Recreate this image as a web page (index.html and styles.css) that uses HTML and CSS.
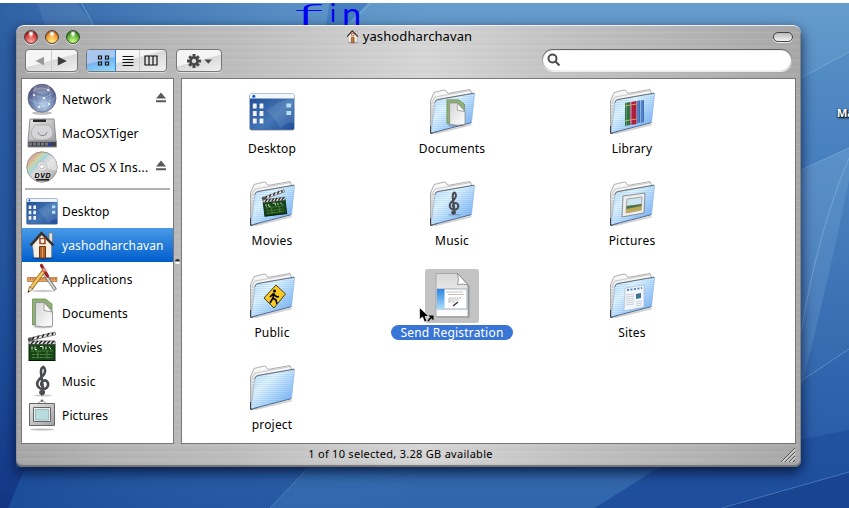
FILE: index.html
```html
<!DOCTYPE html>
<html lang="en">
<head>
<meta charset="utf-8">
<title>yashodharchavan</title>
<link rel="stylesheet" href="styles.css">
</head>
<body>
<svg class="defs" width="0" height="0" aria-hidden="true">
  <defs>
    <linearGradient id="front" x1="0" y1="0" x2="1" y2="1"><stop offset="0" stop-color="#b5daf8"/><stop offset=".35" stop-color="#e0f5ff"/><stop offset=".65" stop-color="#a3cffa"/><stop offset="1" stop-color="#68a5ef"/></linearGradient>
    <linearGradient id="back" x1="0" y1="0" x2="0" y2="1"><stop offset="0" stop-color="#fdfdfd"/><stop offset="1" stop-color="#c4c4c4"/></linearGradient>
    <pattern id="ribs" width="4" height="2" patternUnits="userSpaceOnUse"><path d="M0 .5H4" stroke="#5590d4" stroke-width=".5" opacity=".28"/></pattern>
    <linearGradient id="desk" x1="0" y1="0" x2="1" y2="1"><stop offset="0" stop-color="#1f4a92"/><stop offset=".6" stop-color="#4476b5"/><stop offset="1" stop-color="#1d4b98"/></linearGradient>
    <linearGradient id="paper" x1="0" y1="0" x2="1" y2="1"><stop offset="0" stop-color="#d5d5d5"/><stop offset="1" stop-color="#fff"/></linearGradient>
    <linearGradient id="sheet" x1="0" y1="0" x2="0" y2="1"><stop offset="0" stop-color="#d8d8d8"/><stop offset="1" stop-color="#fff"/></linearGradient>
    <linearGradient id="stripe" x1="0" y1="0" x2="0" y2="1"><stop offset="0" stop-color="#2a86e0"/><stop offset="1" stop-color="#a9dcfb"/></linearGradient>
    <radialGradient id="globe" cx=".55" cy=".75" r=".7"><stop offset="0" stop-color="#b6cdea"/><stop offset=".55" stop-color="#6f86b2"/><stop offset="1" stop-color="#4b4b72"/></radialGradient>
    <linearGradient id="disc" x1="0" y1="0" x2="1" y2="1"><stop offset="0" stop-color="#c9c9c9"/><stop offset=".2" stop-color="#dcae93"/><stop offset=".3" stop-color="#cbd6a8"/><stop offset=".38" stop-color="#a5d3da"/><stop offset=".48" stop-color="#dcdcdc"/><stop offset="1" stop-color="#a8a8a8"/></linearGradient>
    <linearGradient id="metal" x1="0" y1="0" x2="1" y2="1"><stop offset="0" stop-color="#e6e6e6"/><stop offset="1" stop-color="#a2a2a6"/></linearGradient>
    <linearGradient id="wall" x1="0" y1="0" x2="0" y2="1"><stop offset="0" stop-color="#669dcd"/><stop offset=".3" stop-color="#4e86c1"/><stop offset=".7" stop-color="#356bb0"/><stop offset="1" stop-color="#24559f"/></linearGradient>
    <linearGradient id="wallLeft" x1="0" y1="0" x2="1" y2="0"><stop offset="0" stop-color="#174794" stop-opacity=".7"/><stop offset=".3" stop-color="#2860a6" stop-opacity=".3"/><stop offset=".5" stop-color="#3a78b8" stop-opacity="0"/></linearGradient>
    <linearGradient id="navy" x1="0" y1="0" x2="0" y2="1"><stop offset="0" stop-color="#1c4f9c" stop-opacity="0"/><stop offset="1" stop-color="#133582"/></linearGradient>
  </defs>

  <symbol id="i-house" viewBox="0 0 32 32">
    <ellipse cx="17" cy="29" rx="11" ry="1.800" fill="#000" opacity=".25"/>
    <path d="M23 4h3.500v9H23z" fill="#e6e1d8" stroke="#777" stroke-width=".7"/>
    <path d="M6.500 16 16 6l9.500 10v12.500L8 28.500z" fill="#f6f1e4" stroke="#8b8679" stroke-width=".6"/>
    <path d="M4.500 16.500 15.500 4 27.500 16.500" fill="none" stroke="#3b2f28" stroke-width="2.400"/>
    <path d="M14 9.500h5v5h-5z" fill="#fff" stroke="#a24b1e" stroke-width="1.600"/>
    <path d="M13.500 17.500h6V29h-6z" fill="#b4632a" stroke="#6d3513"/>
    <path d="M16.500 18v10.500" stroke="#e39b5b"/>
  </symbol>
  <symbol id="i-desktop" viewBox="0 0 48 38" preserveAspectRatio="none">
    <path d="M2 37h44" stroke="#000" stroke-width="1.500" opacity=".25"/>
    <rect x="1" y="1" width="46" height="35.500" rx="1" fill="url(#desk)" stroke="#355f9c" stroke-width=".8"/>
    <path d="M18 18q14-12 29-12v24q-8-2-14 6-6-12-15-18z" fill="#fff" opacity=".1"/>
    <path d="M1 1h46v4.500H1z" fill="#f3f6fb"/><circle cx="5" cy="3.300" r="1.600" fill="#165ce0"/>
    <path d="M4 10.500h4v5H4zM11 10.500h4v5h-4zM4 18h4v5H4zM11 18h4v5h-4zM4 25.500h4v5H4zM11 25.500h4v5h-4z" fill="#f0f2f5"/>
    <path d="M39 10.500h5v4h-5zM39 18h5v4h-5z" fill="#b8ddf7"/>
  </symbol>
  <symbol id="i-docs" viewBox="0 0 32 32">
    <ellipse cx="17" cy="30" rx="10" ry="1.500" opacity=".2"/>
    <path d="M6.500 2h13L26 7v21H6.500z" fill="#8fb175" stroke="#6c8d56" stroke-width=".8"/>
    <path d="M9.500 5.500h8.500l8.500 9V29q-8 2-17 0z" fill="url(#paper)" stroke="#888" stroke-width=".8"/>
    <path d="M18 5.500v8l8.500 1.500z" fill="#fff" stroke="#888" stroke-width=".8"/>
  </symbol>
  <symbol id="i-clap" viewBox="0 0 32 32">
    <path d="M3 13h26v16.500H3z" fill="#174616" stroke="#082808"/>
    <path d="M2 29.500h28" stroke="#000" opacity=".4"/>
    <path d="M3 10h26v3.500H3z" fill="#eee" stroke="#222" stroke-width=".6"/>
    <path d="m5 13 3-3m1 3 3-3m1 3 3-3m1 3 3-3m1 3 3-3m1 3 3-3" stroke="#222" stroke-width="1.500"/>
    <path d="M2 7.500 29 1l.7 2.700L3 10z" fill="#eee" stroke="#333" stroke-width=".6"/>
    <path d="m6 9 2-3m3 1.600 2-3m3 1.800 2-3m3 1.800 2-3m3 1.800 1-2.300" stroke="#222" stroke-width="1.500"/>
    <path d="M5 20h22M6 23.500h20M6 26.500h20M12 20v8M21 20v8" stroke="#6f9e58" stroke-width=".7" stroke-dasharray="3 .8"/>
    <path d="M6 15.500v3m3-3v3h2m3-3h3v3m3-3v3m3-3 2 3" fill="none" stroke="#d6e7cb"/>
    <circle cx="4" cy="8.500" r="2" fill="#555"/>
  </symbol>
  <symbol id="i-clef" viewBox="0 0 32 32">
    <ellipse cx="17" cy="30.500" rx="9" ry="1" opacity=".2"/>
    <path d="M17.500 28 15 7.500Q14.800 2.500 17.500 2c2.500 2 2 6-.5 8.500l-4 4q-4 5 .5 8.500 4 2.500 7.500-.5c3-4-.5-8.500-4-6.500q-3.500 2.500-.5 5.500" fill="none" stroke="#4a4b50" stroke-width="2.600" stroke-linecap="round"/>
    <circle cx="15.500" cy="27.500" r="2.400" fill="#4a4b50"/><path d="M15 30q4-.5 3-4" fill="none" stroke="#4a4b50" stroke-width="1.500"/>
  </symbol>
  <symbol id="i-frame" viewBox="0 0 32 32">
    <path d="m11 5 5-4 5 4" fill="none" stroke="#888" stroke-width=".8"/><circle cx="16" cy="1.800" r="1.300" fill="#777"/>
    <path d="M3.500 4.500h25v22h-25z" fill="url(#metal)" stroke="#666"/>
    <path d="M7.500 8.500h17v14h-17z" fill="#eee" stroke="#666"/>
    <path d="M9.500 10.500h13v10.500h-13z" fill="#b9dcdd" stroke="#91b1b4" stroke-width=".8"/>
    <ellipse cx="16" cy="30.500" rx="12" ry="1" opacity=".25"/>
  </symbol>
  <symbol id="i-apps" viewBox="0 0 32 32">
    <ellipse cx="17" cy="28" rx="12" ry="1.200" opacity=".2"/>
    <path d="M1.500 14.500h29.500v4H1.500z" fill="#e5a460" stroke="#ab6931" stroke-width=".7"/><path d="M4 16h26" stroke="#94521d" stroke-dasharray="1 1.500"/>
    <path d="m18 10 11.500 17" stroke="#777" stroke-width="3.400"/><path d="m18.500 11 10.500 15.500" stroke="#ddd" stroke-width="1.600"/>
    <path d="M15.500 2.500 21.500 13" stroke="#a32224" stroke-width="3.200" stroke-linecap="round"/>
    <path d="M17.500 8 5 25.500" stroke="#a6731f" stroke-width="4"/><path d="M17 9 5 25" stroke="#f4c863" stroke-width="2.400"/>
    <path d="m17.500 8 1.800-2.500" stroke="#dc8c83" stroke-width="4"/><path d="m3.300 23.500-1.300 6 5-3.500z" fill="#ead3ac" stroke="#6a5130" stroke-width=".6"/><path d="M2 29.500v-2l1.500 1z"/>
  </symbol>
  <symbol id="i-globe" viewBox="0 0 32 32">
    <ellipse cx="16" cy="30" rx="10" ry="1.700" opacity=".25"/>
    <circle cx="16" cy="15.200" r="14" fill="url(#globe)" stroke="#57607f" stroke-width=".7"/>
    <path d="M5 9q9-8 22 0M3 16q12 10 26-1M10 3q-6 12 3 25M22 3q6 13-4 25M7 12l11 3 9-5M18 15l-5 9 10-2z" fill="none" stroke="#d5e0f3" stroke-width=".5" opacity=".65"/>
    <g fill="#fff"><circle cx="18" cy="15" r="1.100"/><circle cx="8" cy="12" r="1"/><circle cx="13" cy="24" r="1"/><circle cx="23" cy="21" r="1"/><circle cx="22" cy="7" r="1"/></g>
    <ellipse cx="16" cy="6.500" rx="9" ry="4.500" fill="#fff" opacity=".22"/>
  </symbol>
  <symbol id="i-drive" viewBox="0 0 32 32">
    <path d="M4 2h24l2 22H2z" fill="url(#metal)" stroke="#777" stroke-width=".8"/>
    <path d="M2 24.500h28.500v5.500H2z" fill="#3b3e45" stroke="#8c8c8c"/><path d="M3 27h21" stroke="#74777f" stroke-width="3" stroke-dasharray="3 1"/><path d="M22 26h3v3h-3z" fill="#263ca0"/>
    <path d="M7 2.500h13V5H7z" fill="#26282c"/>
    <path d="M9 8h14q4 4 4 9-2 6-11 6T5 17q0-5 4-9z" fill="#d6d6d8" stroke="#a0a0a2" stroke-width=".7"/>
    <path d="M12 15q1 4 5 3.500 4 0 4-3.500" fill="none" stroke="#888"/>
  </symbol>
  <symbol id="i-dvd" viewBox="0 0 32 32">
    <circle cx="16" cy="16" r="15.200" fill="url(#disc)" stroke="#858585" stroke-width=".8"/>
    <path d="m16 16 12-10q4 6 3 14z" fill="#fff" opacity=".4"/>
    <circle cx="16" cy="15.500" r="5" fill="#e2e2e2" stroke="#b5b5b5" stroke-width=".7"/><circle cx="16" cy="15.500" r="2.300" fill="#fff" stroke="#999" stroke-width=".6"/>
    <text class="dvd-text" x="8.500" y="27" textLength="16">DVD</text><path d="M10 28.800h13" stroke="#111" stroke-width="1.500"/>
  </symbol>
  <symbol id="i-folder" viewBox="0 0 48 48">
    <path d="M3 45.500 42 36l3 1-37 9z" opacity=".18"/>
    <path d="M2.500 45V13L6 4.500 16 2q2-.3 3 2.500l1.500.8L42 1.500 44 6 9 44z" fill="url(#back)" stroke="#8c8c8c" stroke-width=".7"/>
    <path d="M4 14 7 9l36-6.500" fill="none" stroke="#aaa" stroke-width=".6"/>
    <path d="M3 15h4M3 18h4M3 21h4M3 24h3M3 27h3M3 30h3M3 33h3M3 36h3M3 39h2" stroke="#aaa" stroke-width=".6"/>
    <path d="M3 45 7 14.500Q7.300 12 10 11.500L46.700 5 43.500 34.500Z" fill="url(#front)"/>
    <path d="M3 45 7 14.500Q7.300 12 10 11.500L46.700 5 43.500 34.500Z" fill="url(#ribs)" stroke="#7ea6d6" stroke-width=".5"/>
    <path d="M7 14.500Q7.300 12 10 11.500L46 5.200" fill="none" stroke="#555" stroke-width=".8"/><path d="M3 45.200 43.300 34.700" stroke="#405578" stroke-width=".8"/><path d="M2.500 38v7.300l2 .2" fill="none" stroke="#333" stroke-width=".9"/>
  </symbol>
  <symbol id="i-eject" viewBox="0 0 12 11"><path d="m6 .5 5 6H1zM1 8.200h10v2H1z" fill="#5a5a5a"/></symbol>
</svg>

<svg class="wallpaper" viewBox="0 0 849 508" aria-hidden="true">
  <path d="M0 0h849v508H0z" fill="url(#wall)"/>
  <path d="M0 0h849v508H0z" fill="url(#wallLeft)"/>
  <path d="M0 250h16v218H25L8 508H0z" fill="url(#navy)"/>
  <path d="M36 0h38l20 26H45z" fill="#fff" opacity=".07"/><path d="m80 0 14 26" stroke="#9cc6e6" opacity=".5"/>
  <path d="M330 0h40l-22 26h-22z" fill="#225faf" opacity=".4"/><path d="m372 2-26 24" stroke="#a0c8e8" opacity=".6"/>
  <path d="M849 52 801 78v94l48-24z" fill="#2b65b2" opacity=".15"/><path d="M849 52 801 78" stroke="#86b6df" opacity=".6"/>
  <path d="M849 148 801 170v220q30-120 48-210z" fill="#8fc0e6" opacity=".2"/>
  <path d="M849 148 801 170M849 158Q818 230 801 333M801 381l48-32" fill="none" stroke="#a2cdea" opacity=".4"/>
  <path d="M801 381l48-32v159H780z" fill="#1f5aa9" opacity=".15"/>
  <path d="M310 466h350l-65 42H270z" fill="#4c8bc6" opacity=".3"/>
  <path d="M660 468 595 508H722L849 472V430z" fill="#164597" opacity=".45"/>
  <path d="M849 472 722 508H849z" fill="#123784" opacity=".6"/><path d="M849 472 722 508M308 468l-38 40" stroke="#6aa0d5" opacity=".5"/>
  <path d="M0 0h849v3H0z" fill="#fff"/>
</svg>

<main class="window">
  <header class="titlebar">
    <div class="lights"><i class="light red"></i><i class="light amber"></i><i class="light green"></i></div>
    <h1 class="title"><svg class="title-icon"><use href="#i-house"/></svg><span>yashodharchavan</span></h1>
    <i class="pill"></i>
  </header>
  <div class="toolbar">
    <div class="group nav">
      <span class="seg"><svg width="10" height="10"><path d="M9 .8v8.400L.5 5z" fill="#999"/></svg></span>
      <span class="seg"><svg width="10" height="10"><path d="M.8.5v9L9.800 5z" fill="#3c3c3c"/></svg></span>
    </div>
    <div class="group views">
      <span class="seg active"><svg width="13" height="11"><path d="M1.500 1h3v3h-3zM8.500 1h3v3h-3zM1.500 7h3v3h-3zM8.500 7h3v3h-3z" fill="none" stroke="#111" stroke-width="1.200"/></svg></span>
      <span class="seg list"><svg width="12" height="12"><path d="M.5 1.500h11M.5 4.500h11M.5 7.500h11M.5 10.500h11" stroke="#111" stroke-width="1.200"/></svg></span>
      <span class="seg columns"><svg width="14" height="11"><path d="M1 1h12v9H1zM5 1v9M9 1v9" fill="none" stroke="#111" stroke-width="1.200"/></svg></span>
    </div>
    <div class="group action">
      <svg width="26" height="16" viewBox="0 0 26 16"><g stroke="#484848" stroke-width="3"><path d="M8 1v14M1 8h14M3.200 3.200l9.600 9.600M12.800 3.200l-9.600 9.600"/></g><circle cx="8" cy="8" r="4.700" fill="#484848"/><circle cx="8" cy="8" r="2.200" fill="#ddd"/><path d="M18.500 6.500H26l-3.700 4.200z" fill="#484848"/></svg>
    </div>
    <div class="search"><svg width="14" height="14"><circle cx="5.500" cy="5.500" r="4" fill="none" stroke="#4d4d4d" stroke-width="2"/><path d="m8.500 8.500 4 4" stroke="#4d4d4d" stroke-width="2.200"/></svg></div>
  </div>

  <div class="panes">
    <nav class="sidebar">
      <div class="row"><svg class="ic"><use href="#i-globe"/></svg><span class="name">Network</span><svg class="eject"><use href="#i-eject"/></svg></div>
      <div class="row"><svg class="ic"><use href="#i-drive"/></svg><span class="name">MacOSXTiger</span></div>
      <div class="row"><svg class="ic"><use href="#i-dvd"/></svg><span class="name wide">Mac OS X Ins...</span><svg class="eject"><use href="#i-eject"/></svg></div>
      <hr class="rule">
      <div class="row"><svg class="ic desk"><use href="#i-desktop"/></svg><span class="name">Desktop</span></div>
      <div class="row selected"><svg class="ic"><use href="#i-house"/></svg><span class="name">yashodharchavan</span></div>
      <div class="row"><svg class="ic"><use href="#i-apps"/></svg><span class="name">Applications</span></div>
      <div class="row"><svg class="ic"><use href="#i-docs"/></svg><span class="name">Documents</span></div>
      <div class="row"><svg class="ic"><use href="#i-clap"/></svg><span class="name">Movies</span></div>
      <div class="row"><svg class="ic"><use href="#i-clef"/></svg><span class="name">Music</span></div>
      <div class="row"><svg class="ic"><use href="#i-frame"/></svg><span class="name">Pictures</span></div>
    </nav>
    <div class="divider"><i class="dimple"></i></div>
    <section class="files">
      <div class="file"><svg class="big" viewBox="0 0 48 48"><use href="#i-desktop" x="1" y="5" width="46" height="38"/></svg><span class="label">Desktop</span></div>
      <div class="file"><svg class="big" viewBox="0 0 48 48"><use href="#i-folder"/><use href="#i-docs" x="13" y="10" width="29" height="29"/></svg><span class="label">Documents</span></div>
      <div class="file"><svg class="big" viewBox="0 0 48 48"><use href="#i-folder"/><path d="m17 15 5-1v23l-5 1z" fill="#2f7241"/><path d="m22.500 14 6-1v23l-6 1z" fill="#ae1e3c"/><path d="m29 13 3-.5v22l-3 1zM32.700 12.500l3.300-.5v22l-3.300 1z" fill="#3d6fb8"/><path d="M18.500 15v23M23.500 14v23M30 13v22M34 12v22" stroke="#fff" stroke-width=".7" opacity=".35"/><path d="m17 18 5-1m-5 16 5-1m.5-15 6-1m-6 16 6-1" stroke="#d9bf62" stroke-width=".8"/></svg><span class="label">Library</span></div>

      <div class="file"><svg class="big" viewBox="0 0 48 48"><use href="#i-folder"/><g transform="rotate(-7 27 24)"><use href="#i-clap" x="13" y="10" width="27" height="27"/></g></svg><span class="label">Movies</span></div>
      <div class="file"><svg class="big" viewBox="0 0 48 48"><use href="#i-folder"/><use href="#i-clef" x="13" y="11" width="25" height="25"/></svg><span class="label">Music</span></div>
      <div class="file"><svg class="big" viewBox="0 0 48 48"><use href="#i-folder"/><path d="m15 16 22-3-1 20-22 4z" fill="#ededed" stroke="#777" stroke-width=".8"/><path d="m19 19 15-2-.8 13L18 33z" fill="#cde4f2" stroke="#888" stroke-width=".7"/><path d="m18.500 26 15-2v6L18 33z" fill="#bda953"/><path d="m18.500 26 15-2v2l-15 3z" fill="#4f7051"/></svg><span class="label">Pictures</span></div>

      <div class="file"><svg class="big" viewBox="0 0 48 48"><use href="#i-folder"/><path d="M28 13 37.500 22 26 36 16 26z" fill="#f6c928" stroke="#4c3f0e"/><circle cx="26.500" cy="19" r="1.500"/><path d="m26 21-1 5-3 5m3-5 3 2 1 4m-7-7 3-3 4 3 2-.5" fill="none" stroke="#000" stroke-width="1.600"/></svg><span class="label">Public</span></div>
      <div class="file picked">
        <svg class="big" viewBox="0 0 48 48"><path d="M8.500 2.500v43h33V14L31 2.500z" opacity=".25"/><path d="M8 1.500v43h32V13L29.500 1.500z" fill="url(#sheet)" stroke="#999" stroke-width=".7"/><path d="M29.500 1.500q2 6 0 11 6-1 10.500.5z" fill="#fff" stroke="#777" stroke-width=".7"/><path d="M9 17h30v20H9z" fill="#fff" stroke="#8e9bac" stroke-width=".8"/><path d="M9 17h7.500v20H9z" fill="url(#stripe)"/><path d="M18 20h17M20 22.500h16M21 26h12M21 28h10M21 30h6M21 26v5" stroke="#aaa" stroke-width=".7"/><path d="m25 34 5-4" stroke="#333" stroke-width="1.500"/></svg>
        <span class="label">Send Registration</span>
        <svg class="cursor" viewBox="0 0 16 17"><path d="M.5.5v12l3-2.500 2 5 2.500-1-2-4.500h4z" stroke="#fff" stroke-width=".7"/><path d="M9 14 12.500 10" stroke="#000" stroke-width="1.500"/><path d="M9.500 8.500h5v5z"/></svg>
      </div>
      <div class="file"><svg class="big" viewBox="0 0 48 48"><use href="#i-folder"/><path d="m17 16 19-3v22l-20 4z" fill="#f2f6fa" stroke="#9eb0c2" stroke-width=".6"/><path d="m19 18 15-2" stroke="#477dcb" stroke-width="1.800" stroke-dasharray="2 1.500"/><path d="m18 23 8-1m-8 3 8-1m-8 3 8-1m-8 3 8-1m-8 3 8-1m-8 3 8-1m2-2 6-1m-6 3 6-1m-6 3 6-1" stroke="#a0adb9" stroke-width=".5"/><path d="m28 22 5-1v5l-5 1z" fill="#3d7595"/></svg><span class="label">Sites</span></div>

      <div class="file"><svg class="big" viewBox="0 0 48 48"><use href="#i-folder"/></svg><span class="label">project</span></div>
    </section>
  </div>
  <footer class="status"><span class="summary">1 of 10 selected, 3.28 GB available</span>
    <svg class="grip" width="16" height="15"><path d="M1 15 15 1M5 15 15 5M9 15l6-6M13 15l2-2" stroke="#555"/><path d="M2 15.500 15.500 2M6 15.500 15.500 6M10 15.500l5.500-5.500" stroke="#fff" stroke-width=".8"/></svg>
  </footer>
</main>

<span class="volume">Ma</span>
<svg class="ink" viewBox="0 0 80 30"><text class="ink-f" transform="translate(2 25) scale(2.900 1)">f</text><text class="ink-i" x="38" y="22">i</text><text class="ink-n" transform="translate(50 25) scale(1.150 1)">n</text></svg>
</body>
</html>
```
FILE: styles.css
```css
* { box-sizing: border-box; }
body {
  position: relative;
  width: 849px;
  height: 508px;
  margin: 0;
  overflow: hidden;
  background: #3b73b5;
  color: #000;
  font: 12px/16px "Noto Sans", "Open Sans", sans-serif;
}
svg { display: block; flex: none; }
.defs { position: absolute; }
.wallpaper { position: absolute; inset: 0; width: 849px; height: 508px; }

.window {
  position: relative;
  display: flex;
  flex-direction: column;
  width: 785px;
  height: 442px;
  margin: 25px 0 0 16px;
  border-radius: 8px 8px 6px 6px;
  background:
    repeating-linear-gradient(0deg, rgba(255,255,255,.08) 0 1px, transparent 1px 3px, rgba(0,0,0,.02) 3px 4px, transparent 4px 7px),
    linear-gradient(90deg, #a6a6a6 0, #b4b4b4 12%, #bdbdbd 28%, #d6d6d6 52%, #c2c2c2 70%, #a8a8a8 100%);
  box-shadow: inset 0 1px #f0f0f0, inset 0 -2px 1px #727272, inset 1px 0 #999, inset -1px 0 #858585, 0 5px 13px rgba(0,10,40,.8);
}
.titlebar {
  display: grid;
  grid-template-columns: 1fr auto 1fr;
  align-items: center;
  height: 24px;
  padding: 0 8px;
}
.lights { display: flex; gap: 7px; }
.light {
  width: 14px;
  height: 14px;
  border: 1px solid #5b3a36;
  border-radius: 50%;
  box-shadow: 0 1px #e4e4e4, inset 0 1px 1px rgba(0,0,0,.55);
}
.red { background: radial-gradient(ellipse at 50% 15%, #fff 0 12%, transparent 35%), radial-gradient(circle at 50% 90%, #ffaaa0, #ce3533 65%); }
.amber { background: radial-gradient(ellipse at 50% 15%, #fff 0 12%, transparent 35%), radial-gradient(circle at 50% 90%, #fff389, #ee9429 65%); }
.green { border-color: #304c26; background: radial-gradient(ellipse at 50% 15%, #fff 0 12%, transparent 35%), radial-gradient(circle at 50% 90%, #d5ff8c, #4ea72a 65%); }
.title { display: flex; align-items: center; gap: 3px; margin: -2px 0 0; font-size: 13px; font-weight: 400; letter-spacing: .1px; }
.title-icon { width: 15px; height: 15px; }
.pill {
  justify-self: end;
  width: 20px;
  height: 10px;
  border: 1px solid #444;
  border-radius: 5px;
  background: linear-gradient(#bbb, #f3f3f3);
  box-shadow: 0 1px #eee;
}
.toolbar { display: flex; height: 29px; padding: 0 9px; }
.group {
  display: flex;
  height: 23px;
  border: 1px solid #777;
  border-radius: 4px;
  overflow: hidden;
  background: linear-gradient(165deg, #f5f5f5 0 48%, #d9d9d9 52%, #f1f1f1);
  box-shadow: 0 1px rgba(255,255,255,.5);
}
.seg { display: flex; flex: 1; align-items: center; justify-content: center; }
.seg + .seg { border-left: 1px solid #ccc; }
.nav { width: 53px; }
.nav .seg:first-child { padding-left: 3px; }
.nav .seg:last-child { padding-right: 4px; }
.views { width: 81px; margin-left: 8px; }
.views .seg.active { flex: 0 0 29px; padding-left: 4px; border-right: 1px solid #268be8; background: linear-gradient(165deg, #a9c7ef 0 48%, #77b3ed 52%, #91ddfd); }
.views .list { flex: 0 0 23px; border-left: 0; }
.views .columns { padding-right: 4px; }
.action { align-items: center; justify-content: center; width: 46px; margin-left: 9px; }
.search {
  display: flex;
  align-items: center;
  width: 250px;
  height: 22px;
  margin-left: auto;
  padding-left: 5px;
  border-radius: 11px;
  background: #fff;
  box-shadow: inset 0 1px 1px #555, inset 1px 0 1px #aaa, inset -1px 0 1px #bbb, 0 1px #eee;
}

.panes { display: flex; height: 366px; padding: 0 5px; }
.sidebar { width: 153px; padding-top: 3px; border: 1px solid #777; background: #fff; }
.row { display: flex; align-items: center; height: 34px; padding: 0 6px 0 4px; }
.ic { width: 32px; height: 32px; }
.ic.desk { height: 27px; }
.name { margin: 2px auto 0 4px; white-space: nowrap; letter-spacing: .13px; }
.name.wide { letter-spacing: .25px; }
.eject { width: 12px; height: 11px; margin-top: -3px; }
.selected { background: linear-gradient(#499be7, #005dcd); color: #fff; }
.rule { height: 2px; margin: 4px 3px; border: 0; background: #b0b0b0; }
.divider { display: flex; align-items: center; justify-content: center; width: 7px; }
.dimple { width: 5px; height: 5px; border-radius: 50%; background: linear-gradient(#333 40%, #fff 60%); }
.files {
  display: grid;
  flex: 1;
  grid-template-columns: repeat(3, 180px);
  grid-auto-rows: 92px;
  align-content: start;
  padding-top: 9px;
  border: 1px solid #777;
  background: #fff;
}
.file { position: relative; display: flex; flex-direction: column; align-items: center; }
.big { width: 48px; height: 48px; }
.label { margin-top: 5px; padding: 0 9px; border-radius: 8px; line-height: 15px; letter-spacing: .2px; white-space: nowrap; }
.picked .big { width: 54px; height: 54px; margin: -3px 0; padding: 3px; border-radius: 3px; background: #c3c3c3; }
.picked .label { background: #3875d7; color: #fff; }
.cursor { position: absolute; left: 57px; top: 35px; width: 16px; height: 17px; }

.status { position: relative; display: flex; justify-content: center; height: 23px; font-size: 11px; line-height: 20px; }
.summary { margin-right: 16px; letter-spacing: .28px; }
.grip { position: absolute; right: 5px; bottom: 5px; }
.volume { position: absolute; left: 837px; top: 105px; color: #fff; font-size: 11px; font-weight: 700; text-shadow: 1px 1px 2px #000, 0 1px 2px #000; }
.ink { position: absolute; left: 292px; top: 0; width: 80px; height: 30px; overflow: visible; fill: #0000f5; font-family: Lato, sans-serif; }
.ink-f { font-size: 30px; font-weight: 300; }
.ink-i { font-size: 25px; }
.ink-n { font-size: 30px; }
.dvd-text { font: italic 900 7px "Liberation Sans", sans-serif; }
```
